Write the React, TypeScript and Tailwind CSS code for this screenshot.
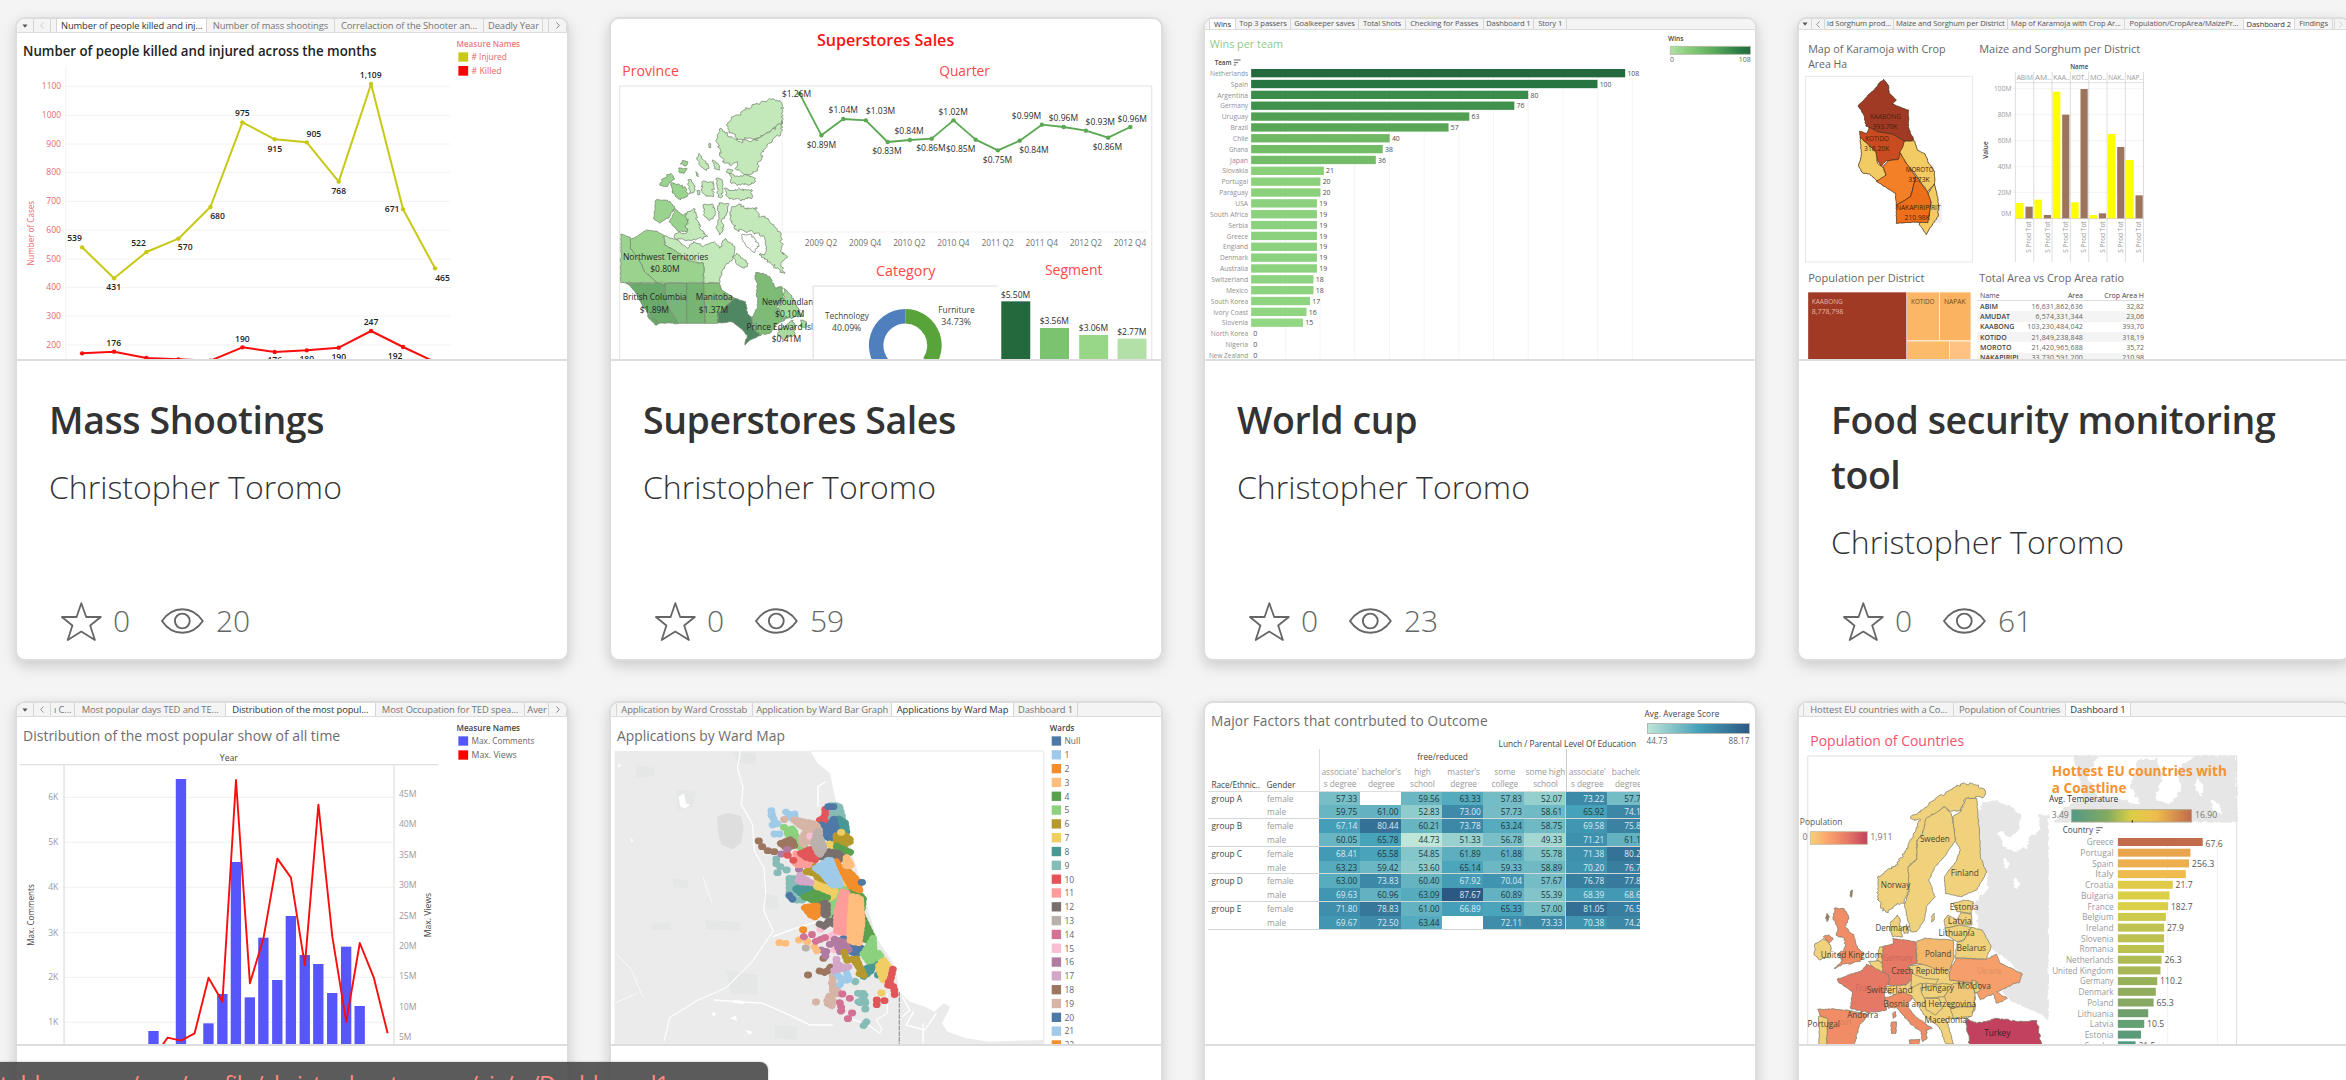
import React, { createContext, useContext } from "react";

/* ------------------------------------------------------------------ */
/* Chart canvas: plots use their own unit grid, texts stay undistorted */
/* ------------------------------------------------------------------ */

type Frame = { ox: number; oy: number; kx: number };
const FrameCtx = createContext<Frame>({ ox: 0, oy: 0, kx: 1 });
const KY = 3;

function Chart({
  ox,
  oy,
  kx = 2.6576,
  w = 550,
  h,
  children,
}: Frame & { kx?: number; w?: number; h: number; children: React.ReactNode }) {
  return (
    <FrameCtx.Provider value={{ ox, oy, kx }}>
      <svg width={w} height={h} viewBox={`0 0 ${w} ${h}`} className="block shrink-0">
        {children}
      </svg>
    </FrameCtx.Provider>
  );
}

function Shapes({ children }: { children: React.ReactNode }) {
  const { ox, oy, kx } = useContext(FrameCtx);
  return <g transform={`scale(${1 / kx} ${1 / KY}) translate(${-ox} ${-oy})`}>{children}</g>;
}

type TProps = {
  x: number;
  y: number;
  s?: number;
  w?: number;
  fill?: string;
  a?: "start" | "middle" | "end";
  b?: number;
  rot?: boolean;
  children: string;
};

function T({ x, y, s = 8.2, w, fill = "#2c2c2c", a = "start", b, rot, children }: TProps) {
  const { ox, oy, kx } = useContext(FrameCtx);
  const px = (x - ox) / kx;
  const py = (y - oy) / KY;
  return (
    <text
      x={px}
      y={py}
      fontSize={s}
      fontWeight={b ?? (s > 10 ? 400 : 450)}
      fill={fill}
      textAnchor={a}
      textLength={w ? w / (rot ? KY : kx) : undefined}
      lengthAdjust="spacingAndGlyphs"
      transform={rot ? `rotate(-90 ${px} ${py})` : undefined}
    >
      {children}
    </text>
  );
}

function Line({
  pts,
  stroke,
  w = 1,
  dots = 0,
}: {
  pts: [number, number][];
  stroke: string;
  w?: number;
  dots?: number;
}) {
  const { ox, oy, kx } = useContext(FrameCtx);
  const p = pts.map(([x, y]) => [(x - ox) / kx, (y - oy) / KY]);
  return (
    <g>
      <polyline points={p.map((q) => q.join(",")).join(" ")} fill="none" stroke={stroke} strokeWidth={w} strokeLinejoin="round" />
      {dots > 0 && p.map((q, i) => <circle key={i} cx={q[0]} cy={q[1]} r={dots} fill={stroke} />)}
    </g>
  );
}

function Box({ x, y, w, h, fill = "none", stroke }: { x: number; y: number; w: number; h: number; fill?: string; stroke?: string }) {
  const { ox, oy, kx } = useContext(FrameCtx);
  return <rect x={(x - ox) / kx} y={(y - oy) / KY} width={w / kx} height={h / KY} fill={fill} stroke={stroke} strokeWidth={0.9} />;
}

/* Turns a coarse outline into a coastline by jittering subdivided edges. */
function coast(src: string, amp = 5) {
  const pts = src.split(" ").map((p) => p.split(",").map(Number));
  let seed = 7;
  const rnd = () => {
    seed = (seed * 16807) % 2147483647;
    return seed / 2147483647 - 0.5;
  };
  const out: string[] = [];
  pts.forEach((p, i) => {
    const q = pts[(i + 1) % pts.length];
    const n = amp ? Math.max(1, Math.round(Math.hypot(q[0] - p[0], q[1] - p[1]) / 5)) : 1;
    for (let k = 0; k < n; k++) {
      const j = k ? amp * 2.4 : 0;
      const x = p[0] + ((q[0] - p[0]) * k) / n + rnd() * j;
      const y = p[1] + ((q[1] - p[1]) * k) / n + rnd() * j;
      out.push(`${x.toFixed(1)},${y.toFixed(1)}`);
    }
  });
  return out.join(" ");
}

function Land({ items, stroke = "#76856f", w = 0.75 }: { items: [string, string, number?][]; stroke?: string; w?: number }) {
  return (
    <Shapes>
      {items.map(([fill, pts, amp], i) => (
        <polygon key={i} points={coast(pts, amp ?? 4)} fill={fill} stroke={stroke} strokeWidth={w} vectorEffect="non-scaling-stroke" strokeLinejoin="round" />
      ))}
    </Shapes>
  );
}

/* ------------------------------------------------------------------ */
/* Workbook tab strip                                                  */
/* ------------------------------------------------------------------ */

type TabDef = { w: number; t?: string; on?: boolean; k?: "caret" | "prev" | "next" | "dim" | "nextdim" };

function Tabs({ tabs, small }: { tabs: TabDef[]; small?: boolean }) {
  return (
    <div className={`flex w-full shrink-0 overflow-hidden border-b border-[#dcdcdc] bg-[#f4f4f4] ${small ? "h-[11px] text-[7.6px]" : "h-[14px] text-[9.4px]"}`}>
      {tabs.map((t, i) => (
        <div
          key={i}
          style={{ width: t.w }}
          className={`flex shrink-0 items-center justify-center overflow-hidden border-r border-[#d6d6d6] leading-none font-medium whitespace-nowrap tracking-[-0.1px] ${
            t.on ? (small ? "h-[11px] bg-white text-[#333]" : "h-[14px] bg-white text-[#333]") : small ? "text-[#555]" : "text-[#747474]"
          }`}
        >
          {t.k === "caret" && (
            <svg width="6" height="4" viewBox="0 0 6 4">
              <path d="M.5 .5h5L3 3.8z" fill="#555" />
            </svg>
          )}
          {(t.k === "prev" || t.k === "dim") && (
            <svg width="4" height="7" viewBox="0 0 4 7" fill="none" stroke={t.k === "dim" ? "#c8c8c8" : "#888"} strokeWidth=".9">
              <path d="M3.5 .5L.7 3.5l2.8 3" />
            </svg>
          )}
          {(t.k === "next" || t.k === "nextdim") && (
            <svg width="4" height="7" viewBox="0 0 4 7" fill="none" stroke={t.k === "nextdim" ? "#c8c8c8" : "#777"} strokeWidth=".9">
              <path d="M.5 .5l2.8 3-2.8 3" />
            </svg>
          )}
          {t.t}
        </div>
      ))}
    </div>
  );
}

/* ------------------------------------------------------------------ */
/* Mass Shootings                                                      */
/* ------------------------------------------------------------------ */

function MassShootings() {
  const ys = [259, 346, 432, 517, 604, 690, 777, 862, 948, 1035];
  const injured: [number, number][] = [[218, 742], [303, 835], [389, 756], [474, 716], [559, 621], [644, 367], [730, 418], [815, 427], [900, 545], [986, 252], [1071, 628], [1156, 805]];
  const killed: [number, number][] = [[218, 1060], [303, 1055], [389, 1074], [474, 1078], [559, 1082], [644, 1042], [730, 1056], [815, 1051], [900, 1043], [986, 993], [1071, 1041], [1156, 1086]];
  const labels: [string, number, number][] = [
    ["539", 198, 724], ["431", 302, 870], ["522", 368, 738], ["570", 492, 750], ["680", 578, 656], ["975", 644, 348], ["915", 730, 456], ["905", 834, 410], ["768", 900, 582], ["1,109", 985, 234], ["671", 1042, 637], ["465", 1176, 842],
    ["176", 302, 1038], ["190", 644, 1026], ["176", 730, 1090], ["180", 815, 1086], ["190", 900, 1079], ["247", 986, 976], ["192", 1050, 1077],
  ];
  return (
    <>
      <Tabs
        tabs={[
          { w: 16.6, k: "caret" }, { w: 17.3, k: "dim" }, { w: 6.4 }, { w: 149.8, t: "Number of people killed and inj...", on: true },
          { w: 127.6, t: "Number of mass shootings" }, { w: 149.8, t: "Correlaction of the Shooter an..." }, { w: 59, t: "Deadly Year" }, { w: 6 }, { w: 17.7, k: "next" },
        ]}
      />
      <Chart ox={45} oy={99} h={326} kx={2.6576}>
        <T x={61} y={169} s={13.8} w={939} b={600} fill="#222">Number of people killed and injured across the months</T>
        {ys.map((y, i) => (
          <g key={y}>
            <Line pts={[[175, y], [1197, y]]} stroke="#f0f0f0" w={0.9} />
            <T x={162} y={y + 9} s={8.6} w={i < 2 ? 51 : 39} a="end" fill="#e8686c">{String(1100 - i * 100)}</T>
          </g>
        ))}
        <Line pts={[[175, 200], [175, 1080]]} stroke="#f0f0f0" />
        <T x={91} y={700} s={8.4} w={195} a="middle" rot fill="#e8686c">Number of Cases</T>
        <Line pts={injured} stroke="#c7c916" w={2} dots={2.2} />
        <Line pts={killed} stroke="#fb0d0d" w={2} dots={2.2} />
        {labels.map(([t, x, y], i) => (
          <T key={i} x={x} y={y} s={8.6} w={t.length > 3 ? 58 : 39} b={600} a="middle" fill="#222">{t}</T>
        ))}
        <T x={1213} y={140} s={8.3} w={169} b={600} fill="#f0787c">Measure Names</T>
        <Box x={1218} y={157} w={26} h={28} fill="#c7c916" />
        <Box x={1218} y={198} w={26} h={29} fill="#ff0000" />
        <T x={1253} y={181} s={8.3} w={94} fill="#ea6468">{"# Injured"}</T>
        <T x={1253} y={222} s={8.3} w={80} fill="#ea6468">{"# Killed"}</T>
      </Chart>
    </>
  );
}

/* ------------------------------------------------------------------ */
/* Superstores Sales                                                   */
/* ------------------------------------------------------------------ */

const CANADA: [string, string, number?][] = [
  ["#c3e8b9", "510,310 505,302 480,298 455,305 430,318 410,330 395,345 375,352 362,375 370,392 385,410 400,418 420,415 438,420 455,405 470,400 490,385 510,362"],
  ["#c3e8b9", "348,385 338,405 335,425 345,445 345,465 358,490 375,497 392,485 385,505 405,520 425,525 445,505 455,480 458,455 470,440 485,420 508,395 510,362 480,395 455,410 438,420 400,425 375,410 358,395"],
  ["#c3e8b9", "370,520 395,530 420,525 440,535 435,550 400,555 375,550"],
  ["#c3e8b9", "357,565 380,572 400,568 428,568 432,590 410,600 370,597 360,585"],
  ["#c3e8b9", "290,460 300,478 315,498 310,512 295,500 285,480", 3],
  ["#c3e8b9", "325,480 340,490 345,510 330,505", 3],
  ["#c3e8b9", "365,508 380,510 372,520 362,516", 2],
  ["#c3e8b9", "315,432 320,430 321,443 316,443", 1],
  ["#c3e8b9", "281,515 287,520 288,530 283,527", 1],
  ["#c3e8b9", "335,535 350,538 352,560 350,592 340,590 338,560", 3],
  ["#9ad38e", "245,482 260,485 255,498 240,492", 2],
  ["#9ad38e", "235,505 258,505 250,520 238,518", 2],
  ["#9ad38e", "215,520 225,535 200,560 185,555 195,535", 3],
  ["#9ad38e", "215,550 235,552 258,570 258,590 240,600 220,580"],
  ["#c3e8b9", "260,540 270,540 280,570 265,582", 3],
  ["#c3e8b9", "284,572 292,572 292,584 286,584", 1],
  ["#c3e8b9", "298,545 328,545 325,590 310,590 295,570"],
  ["#9ad38e", "175,600 205,600 225,620 212,650 185,670 168,655", 2],
  ["#9ad38e", "225,625 245,645 258,640 258,695 235,695 210,665 222,640", 2],
  ["#c3e8b9", "258,640 275,625 285,660 295,690 312,710 280,720 250,720 225,715 232,700 258,695"],
  ["#c3e8b9", "300,615 325,612 333,640 318,662 305,650", 3],
  ["#c3e8b9", "342,610 368,610 362,640 350,660 355,690 345,705 335,680 342,650", 3],
  ["#c3e8b9", "375,625 395,612 410,625 440,622 448,650 470,655 490,680 508,705 510,760 525,770 510,785 518,820 495,805 480,790 450,765 468,755 465,720 450,700 420,695 390,690 375,665"],
  ["#c3e8b9", "390,760 420,790 410,805 392,795 382,775", 3],
  ["#ffffff", "402,706 425,702 448,732 438,758 418,742 408,726", 3],
  ["#c3e8b9", "197,707 230,720 260,745 275,725 300,740 330,725 345,745 360,715 385,740 380,775 358,800 345,830 344,848 302,848 302,790 262,783 230,755 198,735", 2.5],
  ["#9ad38e", "107,720 130,705 150,690 175,693 197,707 198,735 230,755 262,783 302,790 302,848 178,848 160,830 145,815 130,780 107,745", 1.5],
  ["#9ad38e", "82,702 107,712 107,745 130,780 145,815 160,830 178,848 82,848", 1],
  ["#6aab6c", "95,850 200,850 200,905 234,970 183,970 165,950 140,920 122,880 108,860", 1.5],
  ["#78b578", "200,850 257,850 257,970 234,970 200,905", 0],
  ["#76b474", "257,850 302,850 306,970 257,970", 0],
  ["#83bf77", "302,850 344,850 350,870 385,895 340,940 340,970 306,970", 0],
  ["#4f8762", "385,895 413,905 418,940 430,955 432,985 455,1005 425,1020 412,1035 418,1005 400,985 375,965 341,968 340,940", 1.5],
  ["#7ebb77", "440,818 460,820 480,835 492,865 510,860 515,900 495,920 510,940 548,945 500,970 478,1000 450,1005 432,985 430,950 445,920 443,860", 2.5],
  ["#a5d99a", "515,865 530,880 550,920 565,950 510,955 500,925 515,900", 3],
  ["#a9d99f", "500,990 540,960 545,1000 515,1020 498,1005"],
  ["#a9d99f", "560,960 575,965 572,985 560,980", 2],
  ["#6aab6c", "153,940 183,970 176,976 156,955", 2],
];

function Superstores() {
  const xs = [557, 615, 673, 733, 791, 850, 908, 966, 1025, 1084, 1142, 1201, 1259, 1318, 1377, 1436];
  const ys = [281, 406, 357, 361, 426, 420, 416, 361, 419, 451, 422, 374, 381, 392, 413, 381];
  const labels: [string, number, number][] = [
    ["$1.26M", 549, 292], ["$0.89M", 615, 444], ["$1.04M", 673, 340], ["$1.03M", 772, 342], ["$0.83M", 789, 462], ["$0.84M", 848, 402], ["$0.86M", 906, 452], ["$1.02M", 965, 345], ["$0.85M", 985, 456], ["$0.75M", 1083, 489], ["$0.84M", 1180, 458], ["$0.99M", 1160, 357], ["$0.96M", 1258, 364], ["$0.93M", 1356, 375], ["$0.86M", 1375, 449], ["$0.96M", 1441, 365],
  ];
  const segs: [number, number, string, string][] = [[1093, 904, "#24693d", "$5.50M"], [1196, 984, "#7bc36e", "$3.56M"], [1300, 1005, "#98d787", "$3.06M"], [1402, 1016, "#b3e0a6", "$2.77M"]];
  const mapLabels: [string, number, number, number][] = [
    ["Northwest Territories", 201, 779, 227], ["$0.80M", 199, 815, 78], ["British Columbia", 172, 900, 170], ["$1.89M", 171, 938, 78], ["Manitoba", 330, 900, 98], ["$1.37M", 328, 938, 78], ["$0.10M", 531, 951, 78], ["$0.41M", 522, 1026, 78],
  ];
  return (
    <Chart ox={55.8} oy={57} h={340} kx={2.6576}>
      <T x={603} y={138} s={16.6} w={365} b={600} fill="#fb1212">Superstores Sales</T>
      <T x={86} y={228} s={14.4} w={150} fill="#ff4848">Province</T>
      <T x={928} y={229} s={14.4} w={135} fill="#ff4848">Quarter</T>
      <Line pts={[[79, 1090], [79, 258], [1493, 258], [1493, 1090]]} stroke="#e2e2e2" />
      <Line pts={[[511, 270], [511, 696], [1480, 696]]} stroke="#f1f1f1" />
      <Land items={CANADA} />
      {mapLabels.map(([t, x, y, w], i) => (
        <T key={i} x={x} y={y} s={8.4} w={w} a="middle" fill="#262626">{t}</T>
      ))}
      <T x={457} y={915} s={8.4} w={136} fill="#262626">Newfoundlan</T>
      <T x={416} y={990} s={8.4} w={177} fill="#262626">Prince Edward Isl</T>
      <Line pts={xs.map((x, i) => [x, ys[i]] as [number, number])} stroke="#5ba853" w={1.8} dots={2.2} />
      {labels.map(([t, x, y], i) => (
        <T key={i} x={x} y={y} s={8.4} w={78} a="middle">{t}</T>
      ))}
      {["2009 Q2", "2009 Q4", "2010 Q2", "2010 Q4", "2011 Q2", "2011 Q4", "2012 Q2", "2012 Q4"].map((t, i) => (
        <T key={t} x={614 + i * 117.3} y={739} s={8.4} w={86} a="middle" fill="#707070">{t}</T>
      ))}
      <T x={760} y={828} s={14.2} w={158} fill="#ff4848">Category</T>
      <T x={1209} y={825} s={14.2} w={153} fill="#ff4848">Segment</T>
      <Line pts={[[593, 1090], [593, 858], [1082, 858]]} stroke="#dedede" w={1.1} />
      <g fill="none" strokeWidth="14.5" transform="translate(294.3 326.5)">
        <path d="M0 -29.2 A29.2 29.2 0 0 1 23.9 16.7" stroke="#59a43a" />
        <path d="M0 -29.2 A29.2 29.2 0 0 0 -17 23.7" stroke="#4f7fbd" />
      </g>
      <T x={683} y={956} s={8.4} w={117} a="middle" fill="#444">Technology</T>
      <T x={682} y={992} s={8.4} w={78} a="middle" fill="#444">40.09%</T>
      <T x={974} y={940} s={8.4} w={97} a="middle" fill="#444">Furniture</T>
      <T x={973} y={976} s={8.4} w={79} a="middle" fill="#444">34.73%</T>
      {segs.map(([x, y, c, t]) => (
        <g key={t}>
          <Box x={x} y={y} w={77} h={190} fill={c} />
          <T x={x + 38} y={y - 11} s={8.4} w={78} a="middle">{t}</T>
        </g>
      ))}
    </Chart>
  );
}

/* ------------------------------------------------------------------ */
/* World cup                                                           */
/* ------------------------------------------------------------------ */

const WINS: [string, number, string, number][] = [
  ["Netherlands", 108, "#24693d", 101], ["Spain", 100, "#277642", 46], ["Argentina", 80, "#3a8c4b", 82], ["Germany", 76, "#40914e", 74], ["Uruguay", 63, "#519f53", 70], ["Brazil", 57, "#5aa657", 47], ["Chile", 40, "#70b863", 40], ["Ghana", 38, "#73bb66", 51], ["Japan", 36, "#75bc68", 48], ["Slovakia", 21, "#8ad07b", 69], ["Portugal", 20, "#8bd17c", 71], ["Paraguay", 20, "#8bd17c", 77], ["USA", 19, "#8cd17d", 34], ["South Africa", 19, "#8cd17d", 101], ["Serbia", 19, "#8cd17d", 53], ["Greece", 19, "#8cd17d", 57], ["England", 19, "#8cd17d", 67], ["Denmark", 19, "#8cd17d", 75], ["Australia", 19, "#8cd17d", 75], ["Switzerland", 18, "#8ed37f", 98], ["Mexico", 18, "#8ed37f", 59], ["South Korea", 17, "#8fd480", 99], ["Ivory Coast", 16, "#91d582", 93], ["Slovenia", 15, "#93d684", 70], ["North Korea", 0, "#fff", 99], ["Nigeria", 0, "#fff", 60], ["New Zealand", 0, "#fff", 104],
];

function SortIcon({ x, y }: { x: number; y: number }) {
  return (
    <>
      <Line pts={[[x, y], [x + 18, y]]} stroke="#555" w={0.9} />
      <Line pts={[[x, y + 8], [x + 11, y + 8]]} stroke="#555" w={0.9} />
      <Line pts={[[x, y + 15], [x + 6, y + 15]]} stroke="#555" w={0.9} />
    </>
  );
}

function WorldCup() {
  return (
    <>
      <Tabs
        small
        tabs={[
          { w: 5 }, { w: 26, t: "Wins", on: true }, { w: 55, t: "Top 3 passers" }, { w: 68, t: "Goalkeeper saves" }, { w: 47, t: "Total Shots" }, { w: 77.5, t: "Checking for Passes" }, { w: 50.8, t: "Dashboard 1" }, { w: 32.7, t: "Story 1" },
        ]}
      />
      <Chart ox={66.4} oy={90} h={329} kx={2.6576}>
        <defs>
          <linearGradient id="wins">
            <stop offset="0" stopColor="#b3e0a6" />
            <stop offset=".2" stopColor="#8cd17d" />
            <stop offset=".55" stopColor="#5ba95a" />
            <stop offset=".85" stopColor="#2b7f45" />
            <stop offset="1" stopColor="#24693d" />
          </linearGradient>
        </defs>
        <T x={79} y={143} s={11} w={195} fill="#8fc98a">Wins per team</T>
        <T x={92} y={195} s={7} w={45} b={600} fill="#444">Team</T>
        <SortIcon x={143} y={180} />
        {Array.from({ length: 11 }, (_, i) => (
          <Line key={i} pts={[[280 + i * 92.2, 205], [280 + i * 92.2, 1080]]} stroke="#f3f3f3" w={0.8} />
        ))}
        {WINS.map(([t, v, c, w], i) => {
          const y = 219.5 + i * 32.55;
          return (
            <g key={t}>
              <T x={181} y={y + 8} s={7} w={w} a="end" fill="#909090">{t}</T>
              {v > 0 && <Box x={189} y={y - 12.5} w={v * 9.204} h={25} fill={c} />}
              <T x={189 + v * 9.204 + 6} y={y + 8} s={7} w={v > 99 ? 31 : v > 9 ? 21 : 11} fill="#4c4c4c">{String(v)}</T>
            </g>
          );
        })}
        <T x={1297} y={122} s={7} w={41} b={600} fill="#444">Wins</T>
        <Box x={1303} y={139} w={213} h={24} fill="url(#wins)" stroke="#b9b9a9" />
        <T x={1302} y={187} s={7} fill="#666">0</T>
        <T x={1517} y={187} s={7} w={32} a="end" fill="#666">108</T>
      </Chart>
    </>
  );
}

/* ------------------------------------------------------------------ */
/* Food security                                                       */
/* ------------------------------------------------------------------ */

const KARAMOJA: [string, string, number?][] = [
  ["#a03a24", "287,238 300,255 302,278 322,300 312,312 340,325 356,330 355,380 370,420 345,424 310,402 272,396 238,378 232,345 216,318", 1.2],
  ["#c94b21", "220,394 240,400 248,382 272,396 310,402 345,424 338,452 328,478 295,482 280,500 272,485 265,455 240,430 222,412", 1],
  ["#f3cb63", "222,412 240,430 265,455 270,490 285,502 294,525 285,540 267,542 248,522 230,520 218,500 226,460", 1],
  ["#f3cb63", "345,424 372,422 380,450 402,462 412,490 428,515 428,552 408,575 380,530 350,490 332,458", 1],
  ["#f37f26", "285,500 300,482 328,478 332,458 350,490 376,530 362,590 322,616 320,580 267,544 294,525", 0.6],
  ["#f3cb63", "428,552 438,600 438,650 418,680 405,704 385,672 412,650 418,610 410,580", 1],
  ["#ee6f1a", "322,616 362,590 376,530 408,575 418,605 410,668 370,666 322,670", 0.6],
];

const CROPS: [string, number, number][] = [["ABIM", 609, 620], ["AM..", 599, 645], ["KAA..", 275, 344], ["KOT..", 607, 267], ["MO..", 645, 640], ["NAK..", 402, 441], ["NAP..", 480, 586]];

const AREAS = [
  ["ABIM", "16,631,862,636", "32,82"], ["AMUDAT", "6,574,331,344", "23,06"], ["KAABONG", "103,230,484,042", "393,70"], ["KOTIDO", "21,849,238,848", "318,19"], ["MOROTO", "21,420,965,688", "35,72"], ["NAKAPIRIPI", "33,730,591,200", "210,98"],
];

function FoodSecurity() {
  const k = 2.7703;
  return (
    <>
      <Tabs
        small
        tabs={[
          { w: 12.6, k: "caret" }, { w: 13.7, k: "prev" }, { w: 68.6, t: "id Sorghum prod..." }, { w: 113.7, t: "Maize and Sorghum per District" }, { w: 117.7, t: "Map of Karamoja with Crop Ar..." }, { w: 118.4, t: "Population/CropArea/MaizePr..." }, { w: 51.3, t: "Dashboard 2", on: true }, { w: 38.3, t: "Findings" }, { w: 1.4 }, { w: 14.5, k: "nextdim" },
        ]}
      />
      <Chart ox={52.6} oy={90} h={257} kx={k}>
        <T x={78} y={158} s={11.4} w={381} fill="#666">Map of Karamoja with Crop</T>
        <T x={78} y={203} s={11.4} w={108} fill="#666">Area Ha</T>
        <Box x={71} y={229} w={462} h={557} stroke="#e6e6e6" />
        <Box x={350} y={492} w={76} h={60} fill="#eeeeee" />
        <Box x={322} y={610} w={126} h={58} fill="#eeeeee" />
        <Land items={KARAMOJA} stroke="#4e3018" w={0.8} />
        {([["KAABONG", 292, 356, 86], ["393.70K", 291, 386, 70], ["KOTIDO", 269, 424, 66], ["318.20K", 268, 454, 70], ["MOROTO", 387, 515, 78], ["35.73K", 385, 545, 59], ["NAKAPIRIPIRIT", 383, 631, 124], ["210.98K", 380, 660, 70]] as [string, number, number, number][]).map(([t, x, y, w]) => (
          <T key={t} x={x} y={y} s={7} w={w} a="middle" fill="#4a200c">{t}</T>
        ))}
        <T x={552} y={158} s={11.4} w={446} fill="#666">Maize and Sorghum per District</T>
        <T x={829} y={206} s={7} w={50} a="middle" b={600} fill="#444">Name</T>
        {[266, 344, 422, 500, 577].map((y, i) => (
          <g key={y}>
            <Line pts={[[644, y], [1007, y]]} stroke="#efefef" w={0.7} />
            <T x={641} y={y + 7} s={7} w={i ? 38 : 48} a="end" fill="#999">{`${100 - i * 20}M`}</T>
          </g>
        ))}
        <T x={641} y={647} s={7} w={28} a="end" fill="#999">0M</T>
        <T x={577} y={450} s={7} w={52} a="middle" rot b={600} fill="#444">Value</T>
        <Line pts={[[652, 248], [1007, 248]]} stroke="#ddd" w={0.9} />
        <Line pts={[[652, 656], [1007, 656]]} stroke="#ccc" w={0.9} />
        {CROPS.map(([t, a, b], i) => {
          const x = 653 + i * 50.8;
          return (
            <g key={t}>
              <Line pts={[[x - 1, 215], [x - 1, 786]]} stroke="#d4d4d4" w={0.8} />
              <T x={x + 25} y={239} s={7} w={45} a="middle" fill="#999">{t}</T>
              <Box x={x + 1} y={a} w={21} h={655 - a} fill="#ffff00" />
              <Box x={x + 27} y={b} w={20} h={655 - b} fill="#9d755d" />
              <T x={x + 43} y={711} s={7} w={94} a="middle" rot fill="#999">S Prod Tot</T>
            </g>
          );
        })}
        <Line pts={[[1007, 215], [1007, 786]]} stroke="#d4d4d4" w={0.8} />
        <T x={78} y={845} s={11.4} w={322} fill="#666">Population per District</T>
        <T x={552} y={845} s={11.4} w={401} fill="#666">Total Area vs Crop Area ratio</T>
      </Chart>
      <div className="flex h-[72px] overflow-hidden">
        <Chart ox={52.6} oy={861} w={178} h={72} kx={k}>
          <Box x={78} y={877} w={272} h={210} fill="#a03a24" />
          <Box x={352} y={877} w={89} h={144} fill="#fbb766" />
          <Box x={443} y={877} w={85} h={144} fill="#fbb361" />
          <Box x={352} y={1024} w={117} h={60} fill="#fcba6b" />
          <Box x={471} y={1024} w={57} h={60} fill="#ffc283" />
          <T x={88} y={911} s={7} w={86} fill="#e3b9a6">KAABONG</T>
          <T x={88} y={941} s={7} w={87} fill="#e3b9a6">8,778,798</T>
          <T x={363} y={911} s={7} w={65} fill="#6b4a25">KOTIDO</T>
          <T x={454} y={911} s={7} w={60} fill="#6b4a25">NAPAK</T>
        </Chart>
        <div className="mt-[4px] w-[167px] overflow-hidden text-[7px] leading-none text-[#666]">
          <div className="flex h-[10px] items-center border-b border-[#ddd] font-medium text-[#444]">
            <span className="w-[46px] pl-[3px]">Name</span>
            <span className="w-[60px] text-right">Area</span>
            <span className="w-[61px] text-right whitespace-nowrap">Crop Area H</span>
          </div>
          {AREAS.map(([n, a, c], i) => (
            <div key={n} className={`flex h-[10.35px] items-center ${i % 2 ? "bg-[#f4f4f4]" : ""}`}>
              <span className="w-[46px] pl-[3px] font-semibold text-[#444]">{n}</span>
              <span className="w-[60px] text-right tracking-[0.15px]">{a}</span>
              <span className="w-[61px] text-right">{c}</span>
            </div>
          ))}
        </div>
      </div>
    </>
  );
}

/* ------------------------------------------------------------------ */
/* TED shows                                                           */
/* ------------------------------------------------------------------ */

function TedShows() {
  const bars = [[408, 1023], [481, 267], [554, 1000], [591, 912], [627, 516], [664, 922], [700, 743], [737, 870], [773, 678], [810, 795], [846, 822], [883, 909], [920, 770], [956, 948]];
  const line: [number, number][] = [[430, 1068], [445, 1043], [481, 1052], [517, 1030], [554, 863], [591, 935], [627, 270], [664, 880], [700, 745], [737, 506], [773, 563], [810, 826], [846, 344], [883, 740], [920, 996], [956, 759], [993, 862], [1030, 1030]];
  return (
    <>
      <Tabs
        tabs={[
          { w: 16.6, k: "caret" }, { w: 17.3, k: "prev" }, { w: 24.5, t: "ı C..." }, { w: 150.5, t: "Most popular days TED and TE..." }, { w: 149.8, t: "Distribution of the most popul...", on: true }, { w: 149.8, t: "Most Occupation for TED spea..." }, { w: 24, t: "Aver" }, { w: 17.7, k: "next" },
        ]}
      />
      <Chart ox={45} oy={81} h={328} kx={2.6576}>
        <T x={61} y={152} s={14} w={843} fill="#6c6c6c">Distribution of the most popular show of all time</T>
        <T x={608} y={213} s={8.4} w={48} a="middle" b={500} fill="#444">Year</T>
        <Line pts={[[52, 224], [1165, 224]]} stroke="#e0e0e0" w={1.1} />
        {[322, 457, 592, 728, 862, 997].map((y, i) => (
          <g key={y}>
            <Line pts={[[170, y], [1047, y]]} stroke="#efefef" w={0.9} />
            <T x={155} y={y + 9} s={8.6} w={27} a="end" fill="#999">{`${6 - i}K`}</T>
          </g>
        ))}
        {[312, 403, 494, 585, 677, 768, 859, 950, 1041].map((y, i) => (
          <T key={y} x={1060} y={y + 9} s={8.6} w={i === 8 ? 33 : 47} fill="#999">{`${45 - i * 5}M`}</T>
        ))}
        <Line pts={[[170, 224], [170, 1070]]} stroke="#e0e0e0" w={1.3} />
        <Line pts={[[1047, 224], [1047, 1070]]} stroke="#e0e0e0" w={1.3} />
        {bars.map(([x, y]) => (
          <Box key={x} x={x - 14} y={y} w={27.5} h={1070 - y} fill="#5656fb" />
        ))}
        <Line pts={line} stroke="#fb0d0d" w={1.9} />
        <T x={90} y={675} s={8.4} w={185} a="middle" rot b={500} fill="#444">Max. Comments</T>
        <T x={1144} y={675} s={8.4} w={133} a="middle" rot b={500} fill="#444">Max. Views</T>
        <T x={1213} y={122} s={8.3} w={169} b={600} fill="#444">Measure Names</T>
        <Box x={1218} y={139} w={26} h={28} fill="#5656ff" />
        <Box x={1218} y={181} w={26} h={28} fill="#ff0000" />
        <T x={1253} y={163} s={8.3} w={167} fill="#666">Max. Comments</T>
        <T x={1253} y={205} s={8.3} w={120} fill="#666">Max. Views</T>
      </Chart>
    </>
  );
}

/* ------------------------------------------------------------------ */
/* Applications by ward                                                */
/* ------------------------------------------------------------------ */

const WARD_COLORS = ["#4e79a7", "#a0cbe8", "#f28e2b", "#ffbe7d", "#59a14f", "#8cd17d", "#b6992d", "#f1ce63", "#499894", "#86bcb6", "#e15759", "#ff9d9a", "#79706e", "#bab0ac", "#d37295", "#fabfd2", "#b07aa1", "#d4a6c8", "#9d7660", "#d7b5a6", "#4e79a7", "#a0cbe8", "#f28e2b"];

const WARD_MARKS: [string, string][] = [
  ["#a0cbe8", "M482,362v16M484,374L492,400M485,405L508,398M490,432h14M521,366l5,8l18,-2M530,382l22,0"],
  ["#8cd17d", "M515,412h1M524,420l16,-4l8,26l22,26l-15,2l-28,-32zM662,598l22,-5l4,30l-22,10zM646,630l-6,60l24,-15l5,-45z"],
  ["#86bcb6", "M640,347h22l10,40h-36zM495,507v18M505,530h1M522,540h1M498,548h1M530,565l12,0v64l-12,-10zM550,630h15M705,875l5,-10M712,910h20l-10,20l-12,8h26l-14,-14M731,957h1M727,1007l8,-12"],
  ["#499894", "M662,387l8,30l12,12l-4,-30zM548,597l15,-12l35,8l5,18l-42,0zM757,820l-10,22l-20,18l8,-24zM765,855h1"],
  ["#e15759", "M625,358v22l-14,10l17,4"],
  ["#4e79a7", "M633,350h18M648,388l8,38l-20,22l-14,-18l-8,-28l16,14zM530,616l8,12M674,745l5,32l30,15l22,-12l-30,-17z"],
  ["#d7b5a6", "M516,388v10M542,390l58,12l12,25l-46,38l-4,-20l16,-26l-20,-14zM645,860v50M643,880l20,30l-27,8l-8,20l14,10l8,-20M600,936h1"],
  ["#fabfd2", "M585,438v12M612,718h1M633,742l28,-18M650,765v14"],
  ["#b6992d", "M655,437h24l16,16l-22,12l-18,-10zM575,545l25,-18l10,35l32,26l-28,-8l-16,-30z"],
  ["#f1ce63", "M667,427h1M636,462l10,12M598,580l20,10l35,8l-10,26l-26,-10zM678,565l4,22M780,810l14,22l-15,40l-13,-42zM774,909h1"],
  ["#59a14f", "M656,468l36,19l-34,0zM570,620l28,-12l34,16l-22,14zM698,603l28,20l-4,40l-16,-20zM722,676l18,42l12,28l-22,6z"],
  ["#79706e", "M612,500l22,-15l32,5v18l-32,-3zM612,645l18,-7v40l-22,-14zM610,702l16,8l7,-18l16,12l4,-26"],
  ["#9d7660", "M448,453h1M457,470h1M472,482h1M489,485h1M507,460l28,-12l9,18l-22,8zM620,805h1M610,843l18,6l17,-27M579,855h1"],
  ["#b07aa1", "M508,492h1M524,478h1M555,538h1M650,748l26,8l12,24l-24,5zM637,763h1M615,780l14,5M625,798h1"],
  ["#ff9d9a", "M548,492l-2,32h36l6,-18zM672,606l-16,62v54l20,8l14,-66l-8,-56z"],
  ["#e15759", "M525,496h1M540,511h1M560,490l34,-16l8,36l-28,-8z"],
  ["#bab0ac", "M605,425l-11,35l16,35l12,-20zM573,774h1"],
  ["#f28e2b", "M654,515l12,29l24,2l22,28l4,26l-22,-10l-20,-40zM571,653l18,25l14,4v-36zM566,719h1"],
  ["#ffbe7d", "M682,503l12,22h-14zM697,620l-5,82v52l22,4l8,-58l-4,-76zM555,750h1M503,758h1M519,760h1M577,755h1M596,770l10,18"],
  ["#a0cbe8", "M600,535l38,-28l8,24l20,52l-22,3l-27,-37zM655,850l15,22l-7,14M680,842l10,30l-20,-4"],
  ["#d4a6c8", "M558,557l-6,18l34,3zM655,808v26l-8,8l40,-12"],
  ["#d37295", "M590,733v6M568,740l5,6M600,754l28,-13M670,912h1M690,925h1M664,938l6,22l-8,8M696,969h1M685,986h1"],
  ["#8cd17d", "M752,745l-12,25l-14,22l16,24l32,-22l-20,-10z"],
  ["#b6992d", "M676,787l6,24l26,-5l8,22l12,28l-14,-6"],
  ["#e15759", "M805,838l-5,25l-10,22l18,5l2,30M762,930v18M782,932h1"],
  ["#4e79a7", "M722,577h1"],
];

function WardMap() {
  return (
    <>
      <Tabs
        tabs={[{ w: 5.7 }, { w: 136.2, t: "Application by Ward Crosstab" }, { w: 139.6, t: "Application by Ward Bar Graph" }, { w: 121.2, t: "Applications by Ward Map", on: true }, { w: 64.7, t: "Dashboard 1" }]}
      />
      <Chart ox={55.8} oy={81} h={328} kx={2.6576}>
        <T x={72} y={152} s={14} w={446} fill="#6c6c6c">Applications by Ward Map</T>
        <Shapes>
          <path d="M65,183H585L605,220L638,250L645,290L655,340L685,430L700,500L730,620L760,740L812,830L822,905L850,935L890,950L915,965L940,940L958,950L935,1000L950,1025L1000,1045L1060,1055L1205,1050V1070H65z" fill="#ebebeb" />
          <path d="M338,380l30,-12l32,10l8,30l-5,50l-25,20l-30,-15l-8,-40z" fill="#dedede" />
          <path d="M125,225l45,8v25l-50,5zM232,300l50,5l-10,45l-40,10zM165,700h50v20h-55zM305,690l95,5v28l-90,-5zM360,840l85,15v60l-70,-5zM460,610l40,10v40l-35,-5zM490,1005l60,5v40l-60,-5zM220,565l40,5v25l-40,-3zM380,185l60,5v35l-50,-10z" fill="#e5e7e6" />
          <path d="M235,320l15,-10l5,30l12,5l-15,10l-12,-5zM108,445l8,5l-6,8zM380,930l25,2l5,10l-30,-3zM372,985l15,-8l5,15zM412,1020l20,5l-8,10zM322,970l12,-3l-3,14zM75,220l8,8l-8,5z" fill="#fff" />
          <g fill="none" stroke="#fff">
            <path d="M400,183l-8,50l15,60l-5,50l30,60l5,80l25,50l5,70l-5,60l25,60l-55,90l-70,80l-80,40l-70,50l-15,70" strokeWidth="3" />
            <path d="M330,930l130,10l70,35l55,30h60M485,740l60,-25l60,-20M606,350v-60l20,-15M830,920l20,40l-20,20M860,965l-20,40l50,15l30,-50M885,1000v60" strokeWidth="4" />
            <path d="M65,940l60,-30M300,560l25,80M70,790l40,50l30,80" strokeWidth="2" />
            <path d="M690,985l50,20l30,25l5,-15l-15,-25l30,-20v-60" strokeWidth="3" />
          </g>
          <path d="M822,905V1070" stroke="#8f8f8f" strokeWidth="3" strokeDasharray="14 3" />
          {WARD_MARKS.map(([c, d], i) => (
            <path key={i} d={d} fill={c} stroke={c} strokeWidth="20.5" strokeLinecap="round" strokeLinejoin="round" strokeDasharray="1 12" />
          ))}
        </Shapes>
        <Line pts={[[585, 183], [1206, 183], [1206, 1070]]} stroke="#e6e6e6" />
        <T x={1222} y={122} s={8.3} w={65} b={600} fill="#444">Wards</T>
        {WARD_COLORS.map((c, i) => (
          <g key={i}>
            <Box x={1227} y={139 + i * 41.45} w={25} h={28} fill={c} />
            <T x={1261} y={163 + i * 41.45} s={8.3} w={i === 0 ? 42 : i > 9 ? 26 : 13} fill="#666">{i ? String(i) : "Null"}</T>
          </g>
        ))}
      </Chart>
    </>
  );
}

/* ------------------------------------------------------------------ */
/* Outcome factors heat map                                            */
/* ------------------------------------------------------------------ */

const SCORES: (number | null)[][] = [
  [57.33, null, 59.56, 63.33, 57.83, 52.07, 73.22, 57.79],
  [59.75, 61.0, 52.83, 73.0, 57.73, 58.61, 65.92, 74.1],
  [67.14, 80.44, 60.21, 73.78, 63.24, 58.75, 69.58, 75.8],
  [60.05, 65.78, 44.73, 51.33, 56.78, 49.33, 71.21, 61.1],
  [68.41, 65.58, 54.85, 61.89, 61.88, 55.78, 71.38, 80.2],
  [63.23, 59.42, 53.6, 65.14, 59.33, 58.89, 70.2, 76.7],
  [63.0, 73.83, 60.4, 67.92, 70.04, 57.67, 76.78, 77.8],
  [69.63, 60.96, 63.09, 87.67, 60.89, 55.39, 68.39, 68.6],
  [71.8, 78.83, 61.0, 66.89, 65.33, 57.0, 81.05, 76.5],
  [69.67, 72.5, 63.44, null, 72.11, 73.33, 70.38, 74.2],
];

function heat(v: number) {
  const stops: [number, number[]][] = [[44.73, [190, 230, 217]], [66, [70, 162, 186]], [88.17, [42, 87, 131]]];
  const [a, b] = v < 66 ? [stops[0], stops[1]] : [stops[1], stops[2]];
  const f = (v - a[0]) / (b[0] - a[0]);
  return `rgb(${a[1].map((c, i) => Math.round(c + (b[1][i] - c) * f)).join(",")})`;
}

function Outcome() {
  const heads = [["associate'", "s degree"], ["bachelor's", "degree"], ["high", "school"], ["master's", "degree"], ["some", "college"], ["some high", "school"], ["associate'", "s degree"], ["bachelor", "degree"]];
  return (
    <div className="flex h-[341px]">
      <div className="ml-[2.5px] w-[432px] shrink-0 overflow-hidden text-[8.3px]">
        <div className="h-[35px] pt-[8px] pl-[3.5px] text-[13.7px] leading-[20px] tracking-[0.15px] whitespace-nowrap text-[#6c6c6c]">Major Factors that contrbuted to Outcome</div>
        <div className="h-[11px] pr-[3.5px] text-right leading-[11px] font-medium text-[#444]">Lunch / Parental Level Of Education</div>
        <div className="flex h-[42.5px] border-b border-[#ddd]">
          <div className="flex w-[111px] shrink-0 items-end leading-[13px] font-medium text-[#444]">
            <span className="w-[55px] pl-[4px] tracking-[-0.1px]">Race/Ethnic..</span>
            <span className="pl-[4px]">Gender</span>
          </div>
          <div className="shrink-0 border-l border-[#ddd]">
            <div className="h-[17px] w-[247px] border-r border-[#ccc] text-center leading-[15px] font-medium text-[#444]">free/reduced</div>
            <div className="flex">
              {heads.map((h, i) => (
                <div key={i} className={`w-[41.2px] shrink-0 text-center leading-[12.4px] tracking-[-0.05px] whitespace-nowrap text-[#999] ${i === 5 ? "border-r border-[#ccc]" : ""}`}>
                  {h[0]}
                  <br />
                  {h[1]}
                </div>
              ))}
            </div>
          </div>
        </div>
        {SCORES.map((row, r) => (
          <div key={r} className={`flex h-[13.83px] leading-[13px] ${r % 2 ? "border-b border-[#d2d8d8]" : ""}`}>
            <span className="w-[55.5px] shrink-0 pl-[4px] font-medium text-[#444]">{r % 2 ? "" : `group ${"ABCDE"[r / 2]}`}</span>
            <span className="w-[55.5px] shrink-0 pl-[4px] text-[#999]">{r % 2 ? "male" : "female"}</span>
            {row.map((v, c) => (
              <span
                key={c}
                style={{ background: v === null ? "#fff" : heat(v) }}
                className={`w-[41.2px] shrink-0 pr-[2.5px] text-right ${v !== null && v > 66.5 ? "text-[#dceaf2]" : "text-[#22383c]"} ${c === 5 ? "border-r border-[#ccc]" : ""}`}
              >
                {v === null ? "" : v.toFixed(2)}
              </span>
            ))}
          </div>
        ))}
      </div>
      <div className="ml-[5px] w-[106px] pt-[6px] text-[8.2px] leading-[10px] text-[#666]">
        <div className="font-medium tracking-[0.15px] whitespace-nowrap text-[#444]">Avg. Average Score</div>
        <div className="mt-[4px] ml-[2px] h-[11px] w-[103px] border border-[#b8b8b0] bg-linear-to-r from-[#bce4d8] via-[#45a2b9] to-[#2c5985]" />
        <div className="mt-[2px] ml-[2px] flex w-[103px] justify-between">
          <span>44.73</span>
          <span>88.17</span>
        </div>
      </div>
    </div>
  );
}

/* ------------------------------------------------------------------ */
/* EU countries                                                        */
/* ------------------------------------------------------------------ */

const Y = "#f1d27c";
const EUROPE: [string, string, number?][] = [
  [Y, "270,565 290,545 320,525 345,490 370,430 390,390 362,385 400,355 430,325 470,300 500,282 535,282 568,300 565,320 535,325 515,325 500,365 475,365 455,350 430,370 405,385 395,430 380,450 378,510 355,530 358,600 345,640 325,640 300,668 280,655 270,620", 3.2],
  [Y, "455,350 475,372 487,450 455,500 430,530 412,570 430,620 405,650 400,690 378,725 362,725 345,650 358,600 355,530 378,510 380,450 395,430 405,385 430,370", 1.1],
  [Y, "515,325 545,325 548,380 552,420 555,500 572,548 545,600 500,620 458,610 455,560 490,510 500,480 487,455 478,380 500,365", 1.1],
  [Y, "480,640 510,630 535,635 530,670 490,665", 1.2],
  [Y, "455,690 465,675 490,690 500,668 530,672 532,705 500,705 457,715", 0.8],
  [Y, "457,715 500,705 530,712 510,750 490,755 460,735", 0.8],
  [Y, "530,712 560,720 585,770 570,808 485,803 490,760 510,750", 1.2],
  [Y, "305,700 325,675 333,690 330,710 340,740 312,740 305,720", 1.6],
  [Y, "340,712 352,708 355,730 343,730", 1.5],
  [Y, "420,680 427,670 427,690 420,696", 1],
  ["#f18d66", "150,655 175,655 190,680 180,710 205,740 215,775 232,790 222,815 180,822 150,835 175,810 160,795 180,770 178,745 155,735 160,715 148,690", 2.4],
  ["#9a7f68", "130,670 137,680 130,695 126,685", 2],
  ["#9a7f68", "195,605 201,600 198,622 194,618", 1],
  ["#f18d66", "120,740 135,735 147,748 135,760", 2],
  [Y, "95,765 120,745 140,765 140,800 110,810 95,795", 2.4],
  [Y, "275,772 292,770 288,820 268,812", 1.6],
  [Y, "245,815 270,812 288,822 285,848 262,840", 1.2],
  ["#e67965", "285,770 315,760 312,745 345,750 375,755 380,820 355,828 372,860 350,885 300,885 300,855 285,845 282,820", 1.4],
  ["#e67965", "158,868 190,855 230,840 240,822 300,855 303,870 290,900 290,930 295,960 245,968 195,955 200,905 165,880", 1.5],
  ["#f18d66", "105,958 150,957 195,962 245,975 220,1005 205,1070 128,1070 132,990 110,975", 1.5],
  [Y, "108,978 132,985 128,1070 108,1070", 1.2],
  [Y, "355,828 400,822 470,845 475,870 530,880 540,905 540,960 520,985 460,985 480,1062 460,1062 440,1010 400,975 370,925 300,910 290,890 350,885 372,860", 1.5],
  ["#f18d66", "290,925 340,905 368,920 350,945 375,980 422,1015 405,1020 408,1045 395,1055 392,1025 365,1005 340,975 322,952 300,955", 1.6],
  ["#f18d66", "312,970 320,965 321,980 313,985", 1],
  ["#f18d66", "308,998 322,995 321,1030 308,1030", 1.5],
  ["#f18d66", "358,1050 388,1048 384,1064 360,1062", 1],
  [Y, "365,850 400,865 440,868 432,882 390,880 362,895", 1],
  [Y, "388,895 450,880 480,885 455,920 400,925", 1],
  ["#f0c878", "455,920 480,880 530,880 540,910 538,950 470,952", 1.2],
  [Y, "470,952 538,950 530,980 480,985", 1.2],
  [Y, "400,925 440,925 450,955 430,975 405,960", 1.2],
  ["#f4b76e", "378,755 400,745 480,750 482,800 470,840 440,840 400,825 380,820", 1.2],
  ["#f79f6b", "487,805 570,808 600,793 610,820 670,850 665,875 600,905 630,925 600,940 590,910 555,930 540,900 550,885 510,875 470,870 470,845", 1.6],
  [Y, "530,870 545,875 555,900 540,910", 1.5],
  ["#c2415f", "515,985 545,1000 600,985 660,995 712,992 725,1070 525,1070", 2.2],
];

const TEMPS: [string, number, string, string, number, number][] = [
  ["Greece", 1171, "#c26a4c", "67.6", 74, 47], ["Portugal", 1137, "#e9a54e", "", 92, 0], ["Spain", 1133, "#edae4e", "256.3", 59, 62], ["Italy", 1124, "#f0bb4d", "", 51, 0], ["Croatia", 1088, "#dfcb47", "21.7", 79, 47], ["Bulgaria", 1079, "#dccf46", "", 90, 0], ["France", 1075, "#dacf46", "182.7", 72, 60], ["Belgium", 1069, "#ccc94c", "", 87, 0], ["Ireland", 1064, "#bfc34f", "27.9", 76, 47], ["Slovenia", 1064, "#bcc150", "", 90, 0], ["Romania", 1064, "#bcc150", "", 94, 0], ["Netherlands", 1057, "#afbb53", "26.3", 132, 48], ["United Kingdom", 1054, "#a9b855", "", 170, 0], ["Germany", 1045, "#97b05a", "110.2", 93, 61], ["Denmark", 1041, "#90ac5c", "", 97, 0], ["Poland", 1035, "#87a862", "65.3", 73, 48], ["Lithuania", 1020, "#6f9f6a", "", 100, 0], ["Latvia", 1009, "#63a073", "10.5", 66, 47], ["Estonia", 1000, "#5a9b7a", "", 80, 0], ["Sweden", 985, "#4f9a80", "21.5", 80, 47],
];

function EuCountries() {
  const names: [string, number, number, number, string?][] = [
    ["Sweden", 429, 457, 83], ["Finland", 512, 559, 78], ["Norway", 320, 594, 82], ["Estonia", 510, 660, 80], ["Latvia", 498, 702, 66], ["Lithuania", 489, 739, 100], ["Denmark", 312, 722, 95], ["Belarus", 530, 782, 82], ["Poland", 438, 801, 73], ["United Kingdom", 198, 803, 170], ["Germany", 327, 812, 80, "#c9675a"], ["Czech Republic", 387, 852, 158], ["Ukraine", 580, 852, 68, "#d98c62"], ["Fra", 225, 902, 32, "#c9675a"], ["Switzerland", 304, 909, 128], ["Hungary", 436, 903, 91], ["Moldova", 538, 897, 92], ["Bosnia and Herzegovina", 415, 952, 256], ["Andorra", 229, 983, 86], ["Portugal", 121, 1010, 90], ["ain", 182, 1006, 34, "#d0805e"], ["Macedonia", 459, 1000, 117], ["Turkey", 602, 1039, 73, "#3c2028"],
  ];
  return (
    <>
      <Tabs tabs={[{ w: 5.4 }, { w: 149.8, t: "Hottest EU countries with a Co..." }, { w: 111.9, t: "Population of Countries" }, { w: 64.6, t: "Dashboard 1", on: true }]} />
      <Chart ox={52.6} oy={81} h={328} kx={2.7703}>
        <defs>
          <linearGradient id="pop">
            <stop offset="0" stopColor="#f3d27b" />
            <stop offset=".3" stopColor="#fba56c" />
            <stop offset=".65" stopColor="#e67965" />
            <stop offset="1" stopColor="#c2415f" />
          </linearGradient>
          <linearGradient id="temp">
            <stop offset="0" stopColor="#529a86" />
            <stop offset=".3" stopColor="#83aa60" />
            <stop offset=".5" stopColor="#dccf46" />
            <stop offset=".7" stopColor="#efbd4d" />
            <stop offset="1" stopColor="#c26a4c" />
          </linearGradient>
        </defs>
        <T x={84} y={168} s={14.2} w={426} fill="#f95070">Population of Countries</T>
        <Land
          stroke="none"
          items={[
            ["#e6e6e6", "560,340 590,330 640,350 668,380 660,420 640,440 600,420 615,460 650,485 685,470 690,440 720,420 715,375 745,372 745,990 700,960 640,935 610,900 670,860 640,820 590,780 550,710 535,640 575,600 575,560 555,500 548,380"],
            ["#e6e6e6", "815,198 880,198 850,260 880,320 1000,340 970,290 990,210 1045,205 1060,260 1040,330 1080,340 1110,300 1100,240 1145,198 1265,198 1265,398 760,398 790,350 840,330"],
            ["#ffffff", "650,560 665,580 655,600 645,580"],
            ["#ffffff", "620,500 635,520 628,540 618,520"],
            ["#ffffff", "1155,260 1172,290 1165,320 1150,295"],
            ["#ffffff", "1195,330 1215,340 1222,372 1200,360"],
          ]}
        />
        <Land items={EUROPE} stroke="#7d7a66" w={0.75} />
        <Box x={745} y={398} w={520} h={680} fill="#ffffff" />
        <Line pts={[[77, 1070], [77, 198], [1265, 198], [1265, 1070]]} stroke="#e0e0e0" />
        {names.map(([t, x, y, w, c]) => (
          <T key={t} x={x} y={y} s={8.4} w={w} a="middle" fill={c ?? "#4a4430"}>{t}</T>
        ))}
        <T x={55} y={404} s={8.4} w={118} fill="#555">Population</T>
        <Box x={84} y={425} w={158} h={38} fill="url(#pop)" stroke="#c9bca0" />
        <T x={62} y={450} s={8.4} w={14} fill="#777">0</T>
        <T x={250} y={451} s={8.4} w={62} fill="#777">1,911</T>
        <T x={753} y={258} s={13.4} w={485} b={700} fill="#f59331">Hottest EU countries with</T>
        <T x={753} y={310} s={13.4} w={207} b={700} fill="#f59331">a Coastline</T>
        <T x={745} y={337} s={8.3} w={192} fill="#333">Avg. Temperature</T>
        <T x={753} y={385} s={8.4} w={47} fill="#777">3.49</T>
        <Box x={808} y={359} w={332} h={37} fill="url(#temp)" stroke="#aaa78f" />
        <Line pts={[[976, 390], [976, 398]]} stroke="#333" />
        <T x={1150} y={385} s={8.4} w={61} fill="#777">16.90</T>
        <T x={783} y={430} s={8.3} w={84} b={500} fill="#444">Country</T>
        <SortIcon x={876} y={413} />
        <Line pts={[[1074, 440], [1074, 1070]]} stroke="#eee" w={0.8} />
        <Line pts={[[1212, 440], [1212, 1070]]} stroke="#eee" w={0.8} />
        {TEMPS.map(([t, x, c, v, w, vw], i) => {
          const y = 456 + i * 32.1;
          return (
            <g key={t}>
              <T x={924} y={y + 10} s={8.4} w={w} a="end" fill="#999">{t}</T>
              <Box x={936} y={y - 12} w={x - 936} h={24} fill={c} />
              {v && <T x={x + 8} y={y + (i ? 10 : 16)} s={8.4} w={vw} fill="#555">{v}</T>}
            </g>
          );
        })}
      </Chart>
    </>
  );
}

/* ------------------------------------------------------------------ */
/* Cards and page                                                      */
/* ------------------------------------------------------------------ */

type CardDef = { view: () => React.JSX.Element; title?: string; stars?: number; views?: number };

const CARDS: CardDef[] = [
  { view: MassShootings, title: "Mass Shootings", stars: 0, views: 20 },
  { view: Superstores, title: "Superstores Sales", stars: 0, views: 59 },
  { view: WorldCup, title: "World cup", stars: 0, views: 23 },
  { view: FoodSecurity, title: "Food security monitoring tool", stars: 0, views: 61 },
  { view: TedShows },
  { view: WardMap },
  { view: Outcome },
  { view: EuCountries },
];

function Card({ view: View, title, stars, views }: CardDef) {
  return (
    <article className="flex h-[644px] w-[554px] flex-col overflow-hidden rounded-[10px] border-2 border-[#dddddd] bg-white shadow-[0_5px_14px_rgba(0,0,0,0.17)]">
      <div className={`flex shrink-0 flex-col overflow-hidden rounded-t-[8px] border-b-2 border-[#dddddd] ${title ? "h-[342px]" : "h-[343px]"}`}>
        <View />
      </div>
      {title && (
        <div className="flex grow flex-col px-8 pt-[31px] pb-[18px] font-['Open_Sans',sans-serif]">
          <h2 className="text-[37.5px] leading-[55px] font-semibold tracking-[-0.42px] text-[#333]">{title}</h2>
          <p className="mt-[16px] text-[32px] leading-[48px] font-light text-[#333]">Christopher Toromo</p>
          <div className="mt-auto flex items-center pl-[12px] text-[30px] leading-[40px] font-light text-[#666]">
            <svg width="41" height="39" viewBox="0 0 41 39" fill="none" stroke="#666" strokeWidth="1.8" strokeLinejoin="round">
              <path d="M20.3 1.2L25.2 15H39.8L29.2 23.5L33.9 38L20.3 29.6L6.7 38L11.4 23.5L.9 15H15.6Z" />
            </svg>
            <span className="ml-[11px] w-[37px]">{stars}</span>
            <svg className="ml-[11px]" width="43" height="30" viewBox="0 0 43 30" fill="none" stroke="#666" strokeWidth="1.9" strokeLinejoin="round">
              <path d="M1 15C7 6 14 3.2 21.3 3.2S35.6 6 41.8 15C35.6 24 28.6 26.8 21.3 26.8S7 24 1 15Z" />
              <circle cx="21.3" cy="15" r="7.4" />
            </svg>
            <span className="ml-[12px]">{views}</span>
          </div>
        </div>
      )}
    </article>
  );
}

export default function App() {
  return (
    <div className="relative h-[1080px] w-full overflow-hidden bg-[#f4f4f4] font-['Open_Sans','Noto_Sans',sans-serif]">
      <main className="grid grid-cols-[repeat(4,554px)] gap-10 pt-[17px] pl-[15px]">
        {CARDS.map((c, i) => (
          <Card key={i} {...c} />
        ))}
      </main>
      <div className="absolute bottom-0 left-0 h-[18px] w-[768px] overflow-hidden rounded-tr-[8px] bg-[#4d4d4d]/92 shadow-[0_0_2px_rgba(0,0,0,0.35)]">
        <span className="block pt-[5px] text-[23.5px] leading-[34px] tracking-[-0.47px] whitespace-nowrap text-[#ff8a80]">tableau.com/app/profile/christopher.toromo/viz/w/Dashboard1</span>
      </div>
    </div>
  );
}
